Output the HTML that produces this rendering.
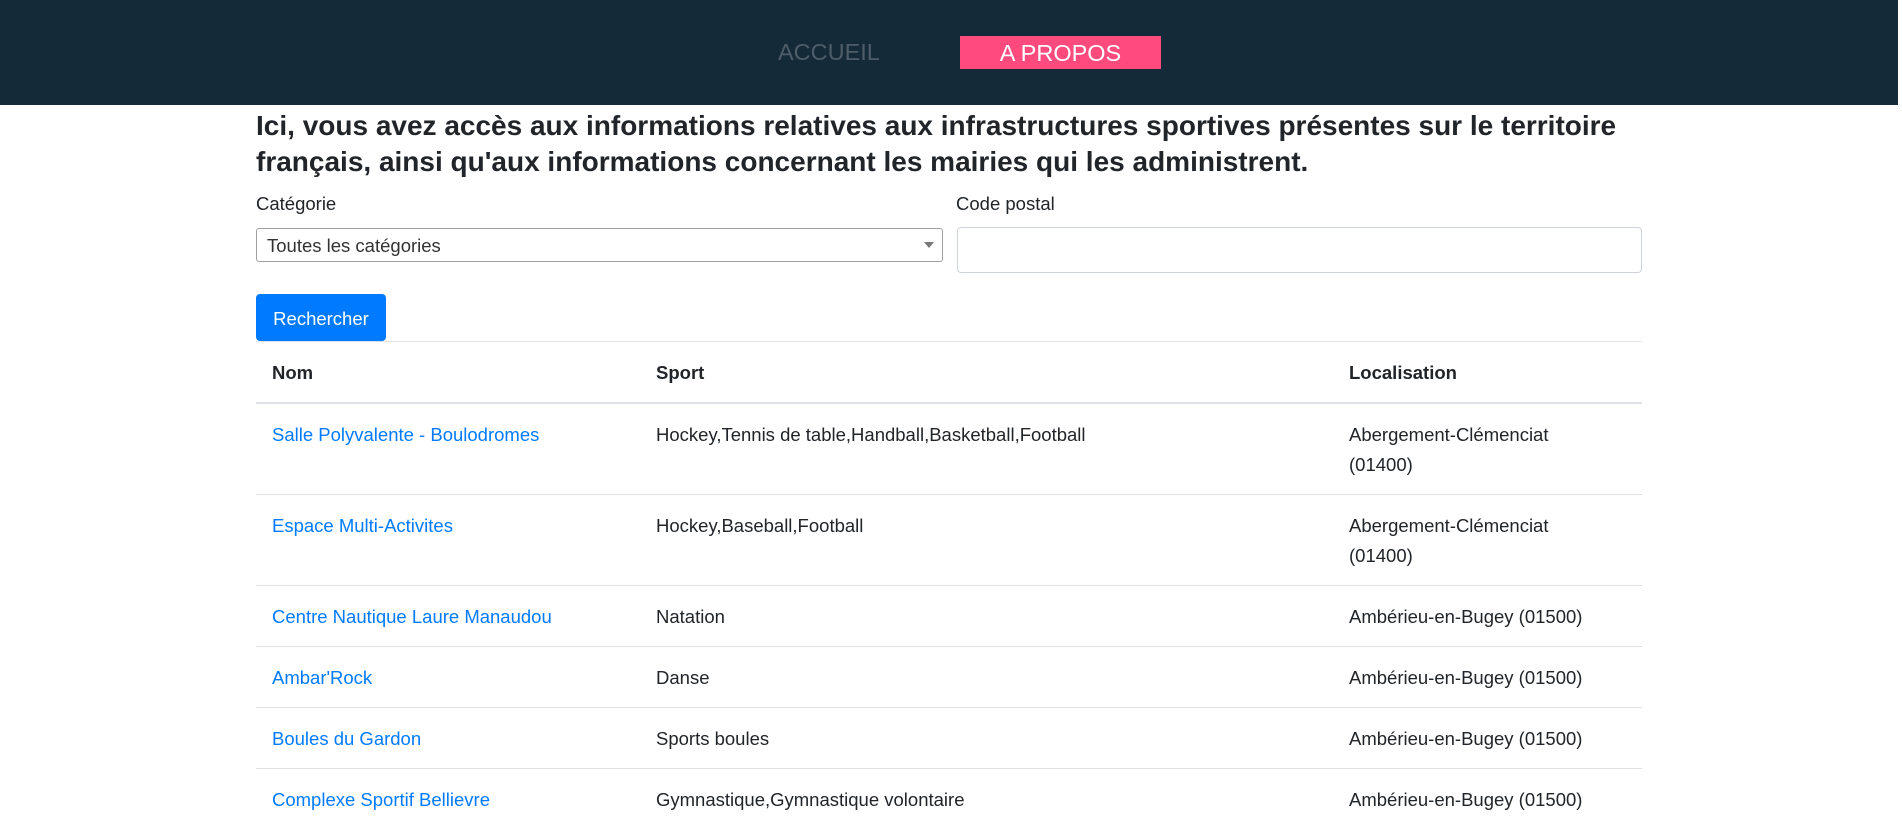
<!DOCTYPE html>
<html><head><meta charset="utf-8">
<style>
*{box-sizing:border-box;margin:0;padding:0}
body{width:1902px;height:828px;overflow:hidden;background:#fff;font-family:"Liberation Sans",sans-serif;color:#212529;position:relative}
.hdr{position:absolute;left:0;top:0;width:1898px;height:105px;background:#152a38}
.nav1{position:absolute;left:778px;top:39px;font-size:23.5px;color:#4d5d69}
.nav2{position:absolute;left:960px;top:36px;width:201px;height:33px;background:#ff4a7d;color:#fff;font-size:23.5px;text-align:center;line-height:34px}
h1{position:absolute;left:256px;top:108px;font-size:28px;font-weight:bold;line-height:36px;white-space:nowrap;color:#212529}
.lbl{position:absolute;top:193px;font-size:18.5px;color:#212529}
.sel{position:absolute;left:256px;top:228px;width:687px;height:34px;border:1px solid #a0a0a0;border-radius:3px;font-size:18.5px;padding:5px 10px;line-height:24px;color:#333}
.sel:after{content:"";position:absolute;right:8px;top:13px;border-left:5px solid transparent;border-right:5px solid transparent;border-top:6px solid #777}
.inp{position:absolute;left:957px;top:227px;width:685px;height:46px;border:1px solid #ced4da;border-radius:4px}
.btn{position:absolute;left:256px;top:294px;width:130px;height:47px;background:#007bff;border-radius:4px;color:#fff;font-size:18.5px;text-align:center;line-height:49px}
table{position:absolute;left:256px;top:341px;width:1386px;border-collapse:collapse;font-size:18.5px}
th,td{text-align:left;vertical-align:top;padding:16px 16px 14px;line-height:30px;border-top:1px solid #dee2e6}
th{border-bottom:2px solid #dee2e6;font-weight:bold}
td a{color:#007bff;text-decoration:none}
</style></head><body>
<div class="hdr"><div class="nav1">ACCUEIL</div><div class="nav2">A PROPOS</div></div>
<h1>Ici, vous avez accès aux informations relatives aux infrastructures sportives présentes sur le territoire<br>français, ainsi qu'aux informations concernant les mairies qui les administrent.</h1>
<div class="lbl" style="left:256px">Catégorie</div>
<div class="lbl" style="left:956px">Code postal</div>
<div class="sel">Toutes les catégories</div>
<div class="inp"></div>
<div class="btn">Rechercher</div>
<table>
<colgroup><col style="width:384px"><col style="width:693px"><col></colgroup>
<tr><th>Nom</th><th>Sport</th><th>Localisation</th></tr>
<tr><td><a>Salle Polyvalente - Boulodromes</a></td><td>Hockey,Tennis de table,Handball,Basketball,Football</td><td>Abergement-Clémenciat<br>(01400)</td></tr>
<tr><td><a>Espace Multi-Activites</a></td><td>Hockey,Baseball,Football</td><td>Abergement-Clémenciat<br>(01400)</td></tr>
<tr><td><a>Centre Nautique Laure Manaudou</a></td><td>Natation</td><td>Ambérieu-en-Bugey (01500)</td></tr>
<tr><td><a>Ambar'Rock</a></td><td>Danse</td><td>Ambérieu-en-Bugey (01500)</td></tr>
<tr><td><a>Boules du Gardon</a></td><td>Sports boules</td><td>Ambérieu-en-Bugey (01500)</td></tr>
<tr><td><a>Complexe Sportif Bellievre</a></td><td>Gymnastique,Gymnastique volontaire</td><td>Ambérieu-en-Bugey (01500)</td></tr>
</table>
</body></html>
